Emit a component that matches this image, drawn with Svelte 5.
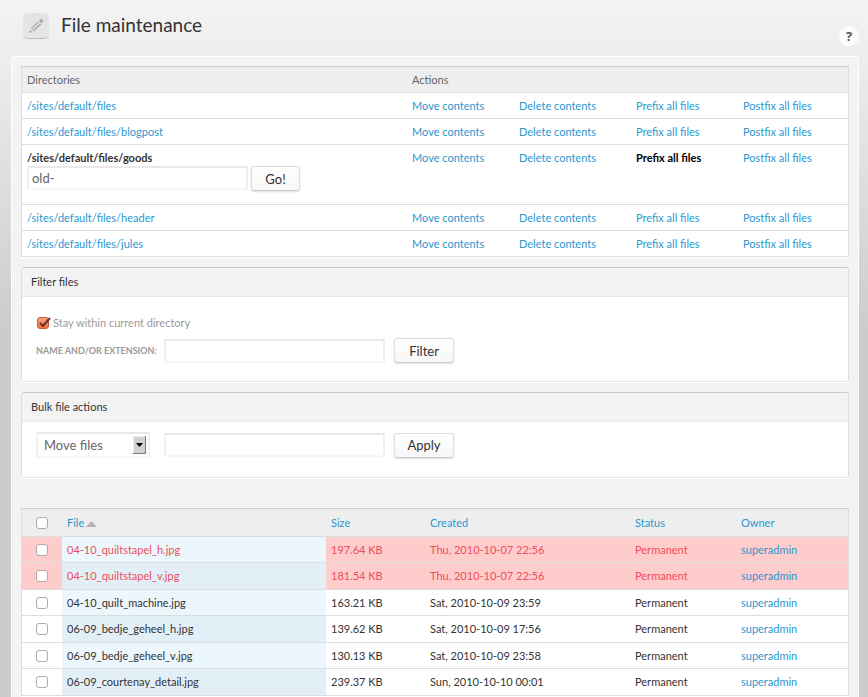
<script>
    const directories = [
        '/sites/default/files',
        '/sites/default/files/blogpost',
        '/sites/default/files/goods',
        '/sites/default/files/header',
        '/sites/default/files/jules'
    ];

    const actions = ['Move contents', 'Delete contents', 'Prefix all files', 'Postfix all files'];

    // The directory and action whose form is open
    let activeDirectory = '/sites/default/files/goods';
    let activeAction = 'Prefix all files';
    let prefix = 'old-';

    let stayInDirectory = true;
    let filter = '';
    let bulkAction = 'Move files';
    let bulkValue = '';

    let files = [
        { name: '04-10_quiltstapel_h.jpg', size: '197.64 KB', created: 'Thu, 2010-10-07 22:56', missing: true, checked: false },
        { name: '04-10_quiltstapel_v.jpg', size: '181.54 KB', created: 'Thu, 2010-10-07 22:56', missing: true, checked: false },
        { name: '04-10_quilt_machine.jpg', size: '163.21 KB', created: 'Sat, 2010-10-09 23:59', missing: false, checked: false },
        { name: '06-09_bedje_geheel_h.jpg', size: '139.62 KB', created: 'Sat, 2010-10-09 17:56', missing: false, checked: false },
        { name: '06-09_bedje_geheel_v.jpg', size: '130.13 KB', created: 'Sat, 2010-10-09 23:58', missing: false, checked: false },
        { name: '06-09_courtenay_detail.jpg', size: '239.37 KB', created: 'Sun, 2010-10-10 00:01', missing: false, checked: false }
    ];

    const open = (directory, action) => {
        activeDirectory = directory;
        activeAction = action;
    };

    // Tick or untick every file
    const toggleAll = (event) => {
        files = files.map((file) => ({ ...file, checked: event.target.checked }));
    };
</script>

<div class="page">
    <header>
        <span class="icon">
            <svg width="16" height="16" viewBox="0 0 16 16" aria-hidden="true">
                <path d="M1 15l1-3 2 2z" fill="#a8a8a8" />
                <path d="M3 10.500l7-7 3 3-7 7z" fill="#c4c4c4" />
                <path d="M4.500 11.500l6.500-6.500" stroke="#e2e2e2" />
                <path d="M5.500 13l7.500-7" stroke="#a0a0a0" />
                <path d="M3 10.500l7-7" stroke="#b0b0b0" />
                <path d="M11 2.500l1.500-1.500q2.500 0 2.500 2.500l-1.500 2z" fill="#a8a8a8" />
            </svg>
        </span>
        <h1>File maintenance</h1>
        <a class="help" href="#help">?</a>
    </header>

    <main>
        <table class="directories">
            <thead>
                <tr>
                    <th>Directories</th>
                    <th class="move">Actions</th>
                    <th class="delete"></th>
                    <th class="prefix"></th>
                    <th class="postfix"></th>
                </tr>
            </thead>
            <tbody>
                {#each directories as directory}
                    <tr class:active={directory === activeDirectory}>
                        <td>
                            {#if directory === activeDirectory}
                                <label for="prefix">{directory}</label>
                                <form class="inline" on:submit|preventDefault>
                                    <input id="prefix" class="text" type="text" bind:value={prefix} />
                                    <button>Go!</button>
                                </form>
                            {:else}
                                <a href="#directory">{directory}</a>
                            {/if}
                        </td>
                        {#each actions as action}
                            <td>
                                <a
                                    href="#action"
                                    class:current={directory === activeDirectory && action === activeAction}
                                    on:click|preventDefault={() => open(directory, action)}>{action}</a>
                            </td>
                        {/each}
                    </tr>
                {/each}
            </tbody>
        </table>

        <section>
            <h2>Filter files</h2>
            <form class="filter" on:submit|preventDefault>
                <label class="stay">
                    <span class="tick">
                        <input type="checkbox" bind:checked={stayInDirectory} />
                        {#if stayInDirectory}
                            <svg width="14" height="14" viewBox="0 0 14 14" aria-hidden="true">
                                <path d="M3 6l3 3 7-8" fill="none" stroke="#6b3424" stroke-width="2" />
                            </svg>
                        {/if}
                    </span>
                    Stay within current directory
                </label>
                <div class="fields">
                    <label class="caption" for="filter">Name and/or extension:</label>
                    <input id="filter" class="text" type="text" bind:value={filter} />
                    <button>Filter</button>
                </div>
            </form>
        </section>

        <section>
            <h2>Bulk file actions</h2>
            <form class="bulk" on:submit|preventDefault>
                <div class="fields">
                    <span class="select">
                        <select aria-label="Bulk action" bind:value={bulkAction}>
                            <option>Move files</option>
                            <option>Delete files</option>
                        </select>
                        <svg width="13" height="18" viewBox="0 0 13 18" aria-hidden="true">
                            <path d="M0 0h13v18h-13z" fill="#d4d0ce" />
                            <path d="M0 18v-18h13" fill="none" stroke="#f1efee" stroke-width="2" />
                            <path d="M12.500 0v17.500h-12.500" fill="none" stroke="#7c7573" />
                            <path d="M3 7h7l-3.500 4z" fill="#000" />
                        </svg>
                    </span>
                    <input class="text" type="text" aria-label="Target" bind:value={bulkValue} />
                    <button>Apply</button>
                </div>
            </form>
        </section>

        <table class="files">
            <thead>
                <tr>
                    <th class="check"><input type="checkbox" aria-label="Select all files" on:change={toggleAll} /></th>
                    <th>
                        <a class="sorted" href="#file">File<svg width="11" height="6" viewBox="0 0 11 6" aria-hidden="true"><path d="M0 6l5.500-6 5.500 6z" fill="#b4b4b4" /></svg></a>
                    </th>
                    <th class="size"><a href="#size">Size</a></th>
                    <th class="created"><a href="#created">Created</a></th>
                    <th class="status"><a href="#status">Status</a></th>
                    <th class="owner"><a href="#owner">Owner</a></th>
                </tr>
            </thead>
            <tbody>
                {#each files as file}
                    <tr class:missing={file.missing}>
                        <td class="check"><input type="checkbox" aria-label={file.name} bind:checked={file.checked} /></td>
                        <td class="name">{file.name}</td>
                        <td>{file.size}</td>
                        <td>{file.created}</td>
                        <td>Permanent</td>
                        <td><a href="#owner">superadmin</a></td>
                    </tr>
                {/each}
            </tbody>
        </table>
    </main>
</div>

<style>
    :global(body) {
        margin: 0;
        background: #ccc linear-gradient(#f4f4f4, #ccc 330px) no-repeat;
    }

    .page {
        box-sizing: border-box;
        display: flex;
        flex-direction: column;
        min-height: 100vh;
        padding: 0 9px 0 11px;
        font-family: 'Trebuchet MS', Lato, sans-serif;
        font-size: 11px;
        line-height: 16px;
        color: #333;
    }

    header {
        display: flex;
        align-items: center;
        height: 56px;
        padding-left: 12px;
    }

    .icon {
        display: flex;
        align-items: center;
        justify-content: center;
        width: 26px;
        height: 25px;
        margin-bottom: 5px;
        border-radius: 5px;
        background: linear-gradient(#e2e2e2, #e6e6e6);
        box-shadow: 0 1px 0 #bbb;
    }

    h1 {
        flex: 1;
        margin: 0 0 6px 12px;
        font-size: 19px;
        font-weight: 400;
        line-height: 28px;
    }

    .help {
        align-self: flex-end;
        width: 20px;
        height: 20px;
        margin-bottom: 10px;
        border-radius: 50%;
        background: #fcfcfc;
        color: #555;
        font-family: 'Open Sans', sans-serif;
        font-size: 13px;
        font-weight: 700;
        line-height: 20px;
        text-align: center;
    }

    main {
        flex: 1;
        padding: 9px 9px 0;
        border: 1px solid #fff;
        border-bottom: none;
        border-radius: 4px 4px 0 0;
        background: #f3f3f3;
    }

    a {
        color: #2a98d0;
        text-decoration: none;
    }

    table {
        width: 100%;
        table-layout: fixed;
        border: 1px solid #ddd;
        border-top-color: #ccc;
        border-bottom: none;
        border-spacing: 0;
        background: #fff;
        box-shadow: 0 1px 0 #fff;
    }

    th,
    td {
        box-sizing: border-box;
        height: 26px;
        padding: 0 5px;
        border-bottom: 1px solid #ddd;
        text-align: left;
        white-space: nowrap;
    }

    th {
        background: #eee;
        color: #666;
        font-weight: 400;
    }

    .move,
    .prefix {
        width: 107px;
    }

    .delete {
        width: 117px;
    }

    .postfix {
        width: 110px;
    }

    .active td {
        height: 60px;
        padding-top: 5px;
        vertical-align: top;
    }

    .active label {
        display: block;
        font-weight: 700;
    }

    .active .current {
        color: #000;
        font-weight: 700;
    }

    .inline {
        display: flex;
        gap: 3px;
    }

    section {
        margin-top: 10px;
        border: 1px solid #ddd;
        border-top-color: #ccc;
        border-bottom-color: #e8e8e8;
        border-radius: 3px;
        background: #fff;
        box-shadow: 0 1px 0 #fff;
    }

    h2 {
        margin: 0;
        padding: 6px 9px;
        border-bottom: 1px solid #e8e8e8;
        background: #f3f3f3;
        font-size: 11px;
        font-weight: 400;
        line-height: 16px;
    }

    .filter {
        padding: 18px 14px;
    }

    .bulk {
        padding: 10px 14px 19px;
    }

    .stay {
        display: flex;
        align-items: center;
        gap: 4px;
        margin-bottom: 7px;
        color: #999;
    }

    .fields {
        display: flex;
        align-items: center;
    }

    .fields button {
        width: 60px;
        margin-left: 9px;
    }

    .caption {
        width: 128px;
        color: #999;
        font-size: 9px;
        font-weight: 700;
        text-transform: uppercase;
        white-space: nowrap;
    }

    .select {
        position: relative;
        width: 114px;
        margin-right: 14px;
    }

    .select svg {
        position: absolute;
        top: 4px;
        right: 4px;
        pointer-events: none;
    }

    input,
    select,
    button {
        box-sizing: border-box;
        margin: 0;
        font-family: inherit;
        font-size: 13px;
    }

    .text,
    select {
        width: 221px;
        height: 24px;
        padding: 0 3px;
        border: 2px solid #f0f0f0;
        border-top-color: #e8e8e8;
        border-bottom-color: #f7f7f7;
        background: #fff;
        color: #666;
    }

    select {
        display: block;
        width: 114px;
        height: 26px;
        padding-left: 6px;
        border-radius: 0;
        appearance: none;
    }

    button {
        width: 49px;
        height: 25px;
        padding: 0;
        border: 1px solid #ddd;
        border-bottom-color: #ccc;
        border-radius: 3px;
        background: linear-gradient(#fff, #f7f7f7);
        box-shadow: 0 1px 2px #ddd;
        color: #333;
    }

    input[type='checkbox'] {
        display: block;
        width: 12px;
        height: 12px;
        border: 1px solid #b0aaa6;
        border-radius: 3px;
        background: #fff;
        appearance: none;
    }

    input[type='checkbox']:checked {
        border-color: #c45a35;
        background: linear-gradient(#f9a583, #ef7443);
    }

    .tick {
        position: relative;
        padding-left: 1px;
    }

    .tick svg {
        position: absolute;
        top: 0;
        left: 1px;
        pointer-events: none;
    }

    .files {
        margin-top: 30px;
    }

    .files th {
        height: 28px;
    }

    .files tr:nth-child(even) td {
        height: 27px;
    }

    .files .check {
        width: 40px;
        padding-left: 14px;
    }

    .sorted svg {
        margin-left: 2px;
    }

    .size {
        width: 99px;
    }

    .created {
        width: 205px;
    }

    .status {
        width: 106px;
    }

    .owner {
        width: 112px;
    }

    .name {
        background: #ebf7fd;
    }

    tr:nth-child(even) .name {
        background: #e2eff7;
    }

    .missing td {
        color: #ee4d5b;
    }

    .missing td:not(.name) {
        background-color: #fcc;
    }
</style>
